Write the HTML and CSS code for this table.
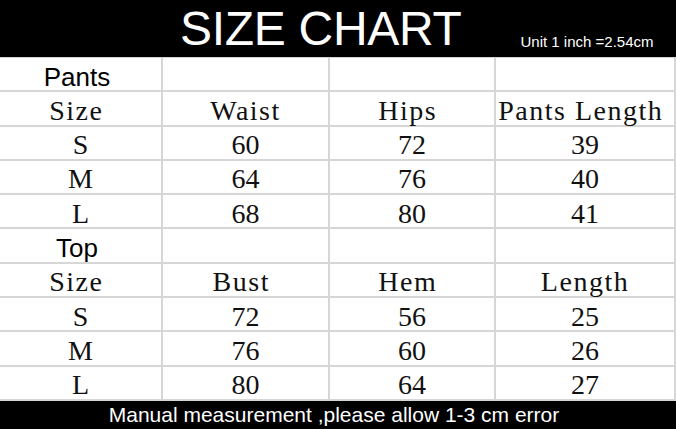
FILE: index.html
```html
<!DOCTYPE html>
<html>
<head>
<meta charset="utf-8">
<link rel="stylesheet" href="styles.css">
</head>
<body>
<div class="page">
  <header class="head">
    <h1 class="title">SIZE CHART</h1>
    <span class="unit">Unit 1 inch =2.54cm</span>
  </header>
  <div class="chart">
    <div class="cell label">Pants&nbsp;</div><div class="cell"></div><div class="cell"></div><div class="cell"></div>
    <div class="cell word">Size&nbsp;</div><div class="cell word">Waist</div><div class="cell word">Hips&nbsp;</div><div class="cell word">Pants Length&nbsp;</div>
    <div class="cell">S</div><div class="cell">60</div><div class="cell">72</div><div class="cell">39</div>
    <div class="cell">M</div><div class="cell">64</div><div class="cell">76</div><div class="cell">40</div>
    <div class="cell">L</div><div class="cell">68</div><div class="cell">80</div><div class="cell">41</div>
    <div class="cell label">Top&nbsp;</div><div class="cell"></div><div class="cell"></div><div class="cell"></div>
    <div class="cell word">Size&nbsp;</div><div class="cell word">Bust&nbsp;</div><div class="cell word">Hem&nbsp;</div><div class="cell word">Length</div>
    <div class="cell">S</div><div class="cell">72</div><div class="cell">56</div><div class="cell">25</div>
    <div class="cell">M</div><div class="cell">76</div><div class="cell">60</div><div class="cell">26</div>
    <div class="cell">L</div><div class="cell">80</div><div class="cell">64</div><div class="cell">27</div>
  </div>
  <footer class="foot">Manual measurement ,please allow 1-3 cm error</footer>
</div>
</body>
</html>
```

FILE: styles.css
```css
* { box-sizing: border-box; }
html, body { margin: 0; padding: 0; background: #fff; }
.page {
  width: 676px;
  height: 429px;
  overflow: hidden;
  display: flex;
  flex-direction: column;
}
.head {
  height: 57px;
  background: #000;
  color: #fff;
  display: flex;
  align-items: flex-start;
  padding-left: 180px;
  font-family: "Liberation Sans", Arial, sans-serif;
}
.title {
  margin: 5px 0 0 0;
  font-size: 48px;
  line-height: 48px;
  font-weight: normal;
  letter-spacing: -0.3px;
}
.unit {
  margin: 34px 0 0 59px;
  font-size: 15px;
  line-height: 15px;
}
.chart {
  height: 344px;
  border-top: 1px solid #d3d3d3;
  display: grid;
  grid-template-columns: 163px 167px 166px 180px;
  grid-template-rows: repeat(10, minmax(0, 1fr));
}
.cell {
  border-right: 2px solid #d6d6d6;
  border-bottom: 2px solid #d6d6d6;
  text-align: center;
  white-space: nowrap;
  font-family: "Liberation Serif", "Times New Roman", serif;
  font-size: 28px;
  line-height: 32px;
  padding-top: 2.5px;
  color: #111;
}
.word {
  letter-spacing: 1.5px;
}
.label {
  font-family: "Liberation Sans", Arial, sans-serif;
  font-size: 26px;
  color: #000;
}
.foot {
  height: 28px;
  background: #000;
  color: #fff;
  text-align: center;
  font-family: "Liberation Sans", Arial, sans-serif;
  font-size: 21px;
  line-height: 28px;
  padding: 0 8px 0 0;
}
```
